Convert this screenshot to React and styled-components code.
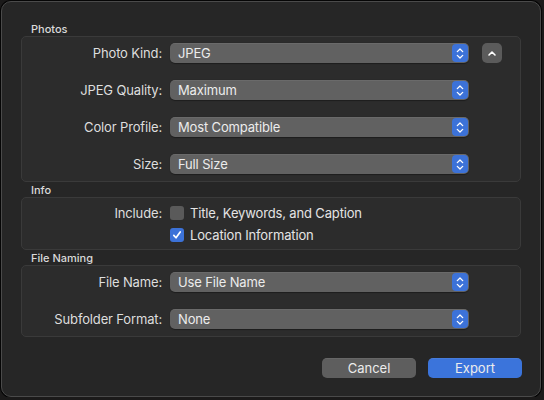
import styled, { createGlobalStyle } from 'styled-components';

const GlobalStyle = createGlobalStyle`
  html, body {
    margin: 0;
    padding: 0;
    background: #1b1a1a;
  }
  body {
    font-family: Inter, "Liberation Sans", sans-serif;
    -webkit-font-smoothing: antialiased;
  }
`;

const Chevrons = () => (
  <svg width="8" height="13" viewBox="0 0 8 13" fill="none">
    <path d="M1.3 4.6 L4 2 L6.7 4.6" stroke="#fff" strokeWidth="1.3" strokeLinecap="round" strokeLinejoin="round" />
    <path d="M1.3 8.4 L4 11 L6.7 8.4" stroke="#fff" strokeWidth="1.3" strokeLinecap="round" strokeLinejoin="round" />
  </svg>
);

const UpChevron = () => (
  <svg width="10" height="7" viewBox="0 0 10 7" fill="none">
    <path d="M2 5 L5 2 L8 5" stroke="#fff" strokeWidth="1.6" strokeLinecap="round" strokeLinejoin="round" />
  </svg>
);

const Check = () => (
  <svg width="10" height="10" viewBox="0 0 10 10" fill="none">
    <path d="M1.8 5.4 L4 7.8 L8.2 2" stroke="#fff" strokeWidth="1.7" strokeLinecap="round" strokeLinejoin="round" />
  </svg>
);

const Popup = ({ value }) => (
  <PopupBox>
    <PopupText>{value}</PopupText>
    <Stepper>
      <Chevrons />
    </Stepper>
  </PopupBox>
);

const CheckRow = ({ label, checked, text }) => (
  <CheckLine>
    <Label>{label}</Label>
    <CheckItem>
      <Box $checked={checked}>{checked && <Check />}</Box>
      <CheckText>{text}</CheckText>
    </CheckItem>
  </CheckLine>
);

export default function App() {
  return (
    <>
      <GlobalStyle />
      <Window>
        <SectionTitle>Photos</SectionTitle>
        <Group $gap={17} $pt={6} $pb={7}>
          <Row>
            <Label>Photo Kind:</Label>
            <Popup value="JPEG" />
            <UpButton>
              <UpChevron />
            </UpButton>
          </Row>
          <Row>
            <Label>JPEG Quality:</Label>
            <Popup value="Maximum" />
          </Row>
          <Row>
            <Label>Color Profile:</Label>
            <Popup value="Most Compatible" />
          </Row>
          <Row>
            <Label>Size:</Label>
            <Popup value="Full Size" />
          </Row>
        </Group>

        <SectionTitle>Info</SectionTitle>
        <Group $gap={0} $pt={4} $pb={3}>
          <CheckRow label="Include:" text="Title, Keywords, and Caption" />
          <CheckRow label="" checked text="Location Information" />
        </Group>

        <SectionTitle>File Naming</SectionTitle>
        <Group $gap={17} $pt={6} $pb={7}>
          <Row>
            <Label>File Name:</Label>
            <Popup value="Use File Name" />
          </Row>
          <Row>
            <Label>Subfolder Format:</Label>
            <Popup value="None" />
          </Row>
        </Group>

        <Footer>
          <Button>Cancel</Button>
          <Button $primary>Export</Button>
        </Footer>
      </Window>
    </>
  );
}

const Window = styled.div`
  box-sizing: border-box;
  margin: 1px 0 0 1px;
  width: 540px;
  height: 396px;
  padding: 19px 19px 0 19px;
  background: #262626;
  border: 1px solid #4a4a4a;
  border-radius: 10px;
  box-shadow: 0 0 0 1px #050505;
  display: flex;
  flex-direction: column;
`;

const SectionTitle = styled.div`
  height: 15px;
  padding: 1px 0 0 10px;
  box-sizing: border-box;
  font-size: 11px;
  line-height: 14px;
  font-weight: 500;
  color: #dadada;
`;

const Group = styled.div`
  box-sizing: border-box;
  background: #2c2c2c;
  border: 1px solid #3a3a3a;
  border-radius: 5px;
  padding: ${(p) => p.$pt}px 0 ${(p) => p.$pb}px 0;
  display: flex;
  flex-direction: column;
  gap: ${(p) => p.$gap}px;
`;

const Row = styled.div`
  display: grid;
  grid-template-columns: 140px 299px 20px;
  column-gap: 8px;
  align-items: center;
  height: 20px;

  & > :nth-child(3) {
    margin-left: 5px;
  }
`;

const Label = styled.div`
  text-align: right;
  font-size: 13px;
  color: #dedede;
  white-space: nowrap;
  letter-spacing: -0.15px;
`;

const PopupBox = styled.div`
  box-sizing: border-box;
  height: 20px;
  background: #616161;
  border-radius: 5px;
  box-shadow: inset 0 0.5px 0 rgba(255, 255, 255, 0.12), 0 0.5px 1px rgba(0, 0, 0, 0.35);
  display: flex;
  align-items: center;
  justify-content: space-between;
  padding: 0 1px 0 8px;
`;

const PopupText = styled.span`
  font-size: 13px;
  color: #ececec;
  letter-spacing: -0.15px;
`;

const Stepper = styled.div`
  width: 16px;
  height: 18px;
  background: #3c72d8;
  border-radius: 4px;
  display: flex;
  align-items: center;
  justify-content: center;
`;

const UpButton = styled.div`
  width: 20px;
  height: 20px;
  background: #5b5b5b;
  border-radius: 5px;
  display: flex;
  align-items: center;
  justify-content: center;
`;

const CheckLine = styled.div`
  display: grid;
  grid-template-columns: 140px auto;
  column-gap: 8px;
  align-items: center;
  height: 22px;
`;

const CheckItem = styled.div`
  display: flex;
  align-items: center;
  gap: 6px;
`;

const Box = styled.div`
  width: 14px;
  height: 14px;
  border-radius: 3px;
  background: ${(p) => (p.$checked ? '#3c72d8' : '#5a5a5a')};
  display: flex;
  align-items: center;
  justify-content: center;
`;

const CheckText = styled.span`
  font-size: 13px;
  color: #e4e4e4;
  letter-spacing: -0.15px;
`;

const Footer = styled.div`
  display: flex;
  justify-content: flex-end;
  gap: 12px;
  margin: 21px -1px 0 0;
`;

const Button = styled.div`
  width: 94px;
  height: 20px;
  border-radius: 5px;
  background: ${(p) => (p.$primary ? '#3b74db' : '#5e5e5e')};
  color: #ececec;
  font-size: 13px;
  display: flex;
  align-items: center;
  justify-content: center;
  box-shadow: inset 0 0.5px 0 rgba(255, 255, 255, 0.12);
`;
